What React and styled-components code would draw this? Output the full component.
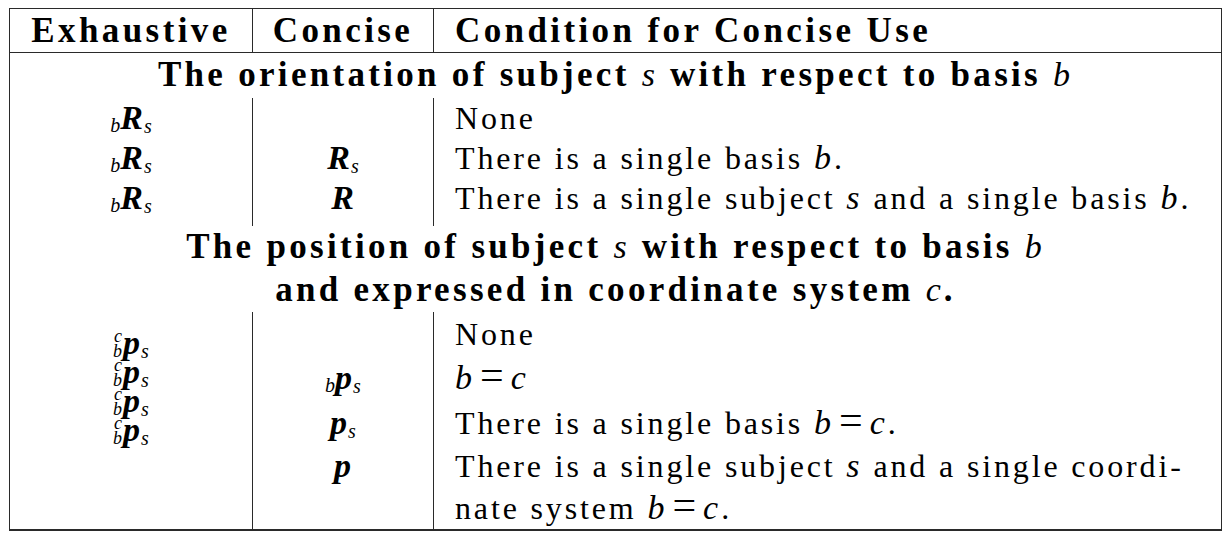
import React from 'react';
import styled, { createGlobalStyle } from 'styled-components';

const GlobalStyle = createGlobalStyle`
  html, body { margin: 0; padding: 0; background: #fff; }
  body { font-family: "Liberation Serif", "Times New Roman", serif; color: #000; }
`;

const Page = styled.div`
  padding: 8px 0 0 9px;
`;

const Table = styled.table`
  border-collapse: collapse;
  table-layout: fixed;
  width: 1213px;
  border-top: 1px solid #2a2a2a;
  border-left: 1px solid #2a2a2a;
  border-right: 1px solid #2a2a2a;
  border-bottom: 2px solid #2a2a2a;
`;

const Col = styled.col`
  width: ${p => (p.$w ? p.$w + 'px' : 'auto')};
`;

const Row = styled.tr`
  height: ${p => p.$h}px;
`;

const HeadCell = styled.th`
  height: 43px;
  padding: 0 ${p => (p.$left ? '21px' : '0')};
  font-size: 35px;
  line-height: 36px;
  letter-spacing: 3.4px;
  font-weight: bold;
  text-align: ${p => (p.$left ? 'left' : 'center')};
  vertical-align: middle;
  border-bottom: 1px solid #2a2a2a;
  border-right: ${p => (p.$sep ? '1px solid #2a2a2a' : 'none')};
  white-space: nowrap;
`;

const SectionCell = styled.td`
  padding: 0;
  font-size: 35px;
  line-height: 36px;
  letter-spacing: 3.3px;
  font-weight: bold;
  text-align: center;
  vertical-align: middle;
  white-space: nowrap;
`;

const Cell = styled.td`
  padding: ${p => (p.$left ? '0 21px' : '0')};
  padding-top: ${p => p.$top || 0}px;
  font-size: 32px;
  letter-spacing: 2.85px;
  line-height: ${p => p.$lh || 34}px;
  text-align: ${p => (p.$left ? 'left' : 'center')};
  vertical-align: ${p => (p.$top !== undefined ? 'top' : 'middle')};
  border-right: ${p => (p.$sep ? '1px solid #2a2a2a' : 'none')};
  white-space: nowrap;
`;

const Var = styled.span`
  font-style: italic;
  font-weight: normal;
  font-size: 34px;
  line-height: 0;
  letter-spacing: 0;
  margin-right: 3px;
`;

const Op = styled.span`
  font-size: 42px;
  line-height: 0;
  letter-spacing: 0;
  margin: 0 7px 0 5px;
`;

const Sym = styled.span`
  font-style: italic;
  letter-spacing: 0;
  white-space: nowrap;
  line-height: 0;
`;

const Base = styled.span`
  font-weight: bold;
  font-size: 34px;
  line-height: 0;
  margin-right: 1px;
`;

const Script = styled.span`
  font-size: 20px;
  line-height: 0;
  vertical-align: ${p => p.$dy}px;
`;

const Stack = styled.span`
  display: inline-flex;
  flex-direction: column;
  align-items: flex-end;
  font-size: 18px;
  line-height: 15px;
  vertical-align: 12px;
  margin-right: 1px;
`;

const StackList = styled.div`
  display: flex;
  flex-direction: column;
  align-items: center;
`;

const StackItem = styled.div`
  height: 29px;
  line-height: 29px;
`;

function Rot() {
  return (
    <Sym>
      <Script $dy={-3}>b</Script>
      <Base>R</Base>
      <Script $dy={-4}>s</Script>
    </Sym>
  );
}

function Pos({ pre, post }) {
  return (
    <Sym>
      {pre === 'cb' && (
        <Stack>
          <span>c</span>
          <span>b</span>
        </Stack>
      )}
      {pre === 'b' && <Script $dy={-3}>b</Script>}
      <Base>p</Base>
      {post && <Script $dy={-4}>s</Script>}
    </Sym>
  );
}

function Eq() {
  return (
    <>
      <Var>b</Var>
      <Op>=</Op>
      <Var>c</Var>
    </>
  );
}

export default function App() {
  return (
    <>
      <GlobalStyle />
      <Page>
        <Table>
          <colgroup>
            <Col $w={243} />
            <Col $w={181} />
            <Col />
          </colgroup>
          <thead>
            <tr>
              <HeadCell $sep>Exhaustive</HeadCell>
              <HeadCell $sep>Concise</HeadCell>
              <HeadCell $left>Condition for Concise Use</HeadCell>
            </tr>
          </thead>
          <tbody>
            <Row $h={45}>
              <SectionCell colSpan={3}>
                The orientation of subject <Var>s</Var> with respect to basis <Var>b</Var>
              </SectionCell>
            </Row>
            <Row $h={40}>
              <Cell $sep><Rot /></Cell>
              <Cell $sep></Cell>
              <Cell $left>None</Cell>
            </Row>
            <Row $h={40}>
              <Cell $sep><Rot /></Cell>
              <Cell $sep>
                <Sym><Base>R</Base><Script $dy={-4}>s</Script></Sym>
              </Cell>
              <Cell $left>There is a single basis <Var>b</Var>.</Cell>
            </Row>
            <Row $h={48}>
              <Cell $sep $top={0} $lh={40}><Rot /></Cell>
              <Cell $sep $top={0} $lh={40}><Sym><Base>R</Base></Sym></Cell>
              <Cell $left $top={0} $lh={40}>
                There is a single subject <Var>s</Var> and a single basis <Var>b</Var>.
              </Cell>
            </Row>
            <Row $h={42}>
              <SectionCell colSpan={3}>
                The position of subject <Var>s</Var> with respect to basis <Var>b</Var>
              </SectionCell>
            </Row>
            <Row $h={44}>
              <SectionCell colSpan={3}>
                and expressed in coordinate system <Var>c</Var>.
              </SectionCell>
            </Row>
            <Row $h={44}>
              <Cell $sep rowSpan={4} $top={17}>
                <StackList>
                  <StackItem><Pos pre="cb" post /></StackItem>
                  <StackItem><Pos pre="cb" post /></StackItem>
                  <StackItem><Pos pre="cb" post /></StackItem>
                  <StackItem><Pos pre="cb" post /></StackItem>
                </StackList>
              </Cell>
              <Cell $sep></Cell>
              <Cell $left>None</Cell>
            </Row>
            <Row $h={45}>
              <Cell $sep><Pos pre="b" post /></Cell>
              <Cell $left><Eq /></Cell>
            </Row>
            <Row $h={44}>
              <Cell $sep><Pos post /></Cell>
              <Cell $left>There is a single basis <Eq />.</Cell>
            </Row>
            <Row $h={85}>
              <Cell $sep $top={0} $lh={42}><Pos /></Cell>
              <Cell $left $top={0} $lh={42}>
                There is a single subject <Var>s</Var> and a single coordi-
                <br />
                nate system <Eq />.
              </Cell>
            </Row>
          </tbody>
        </Table>
      </Page>
    </>
  );
}
